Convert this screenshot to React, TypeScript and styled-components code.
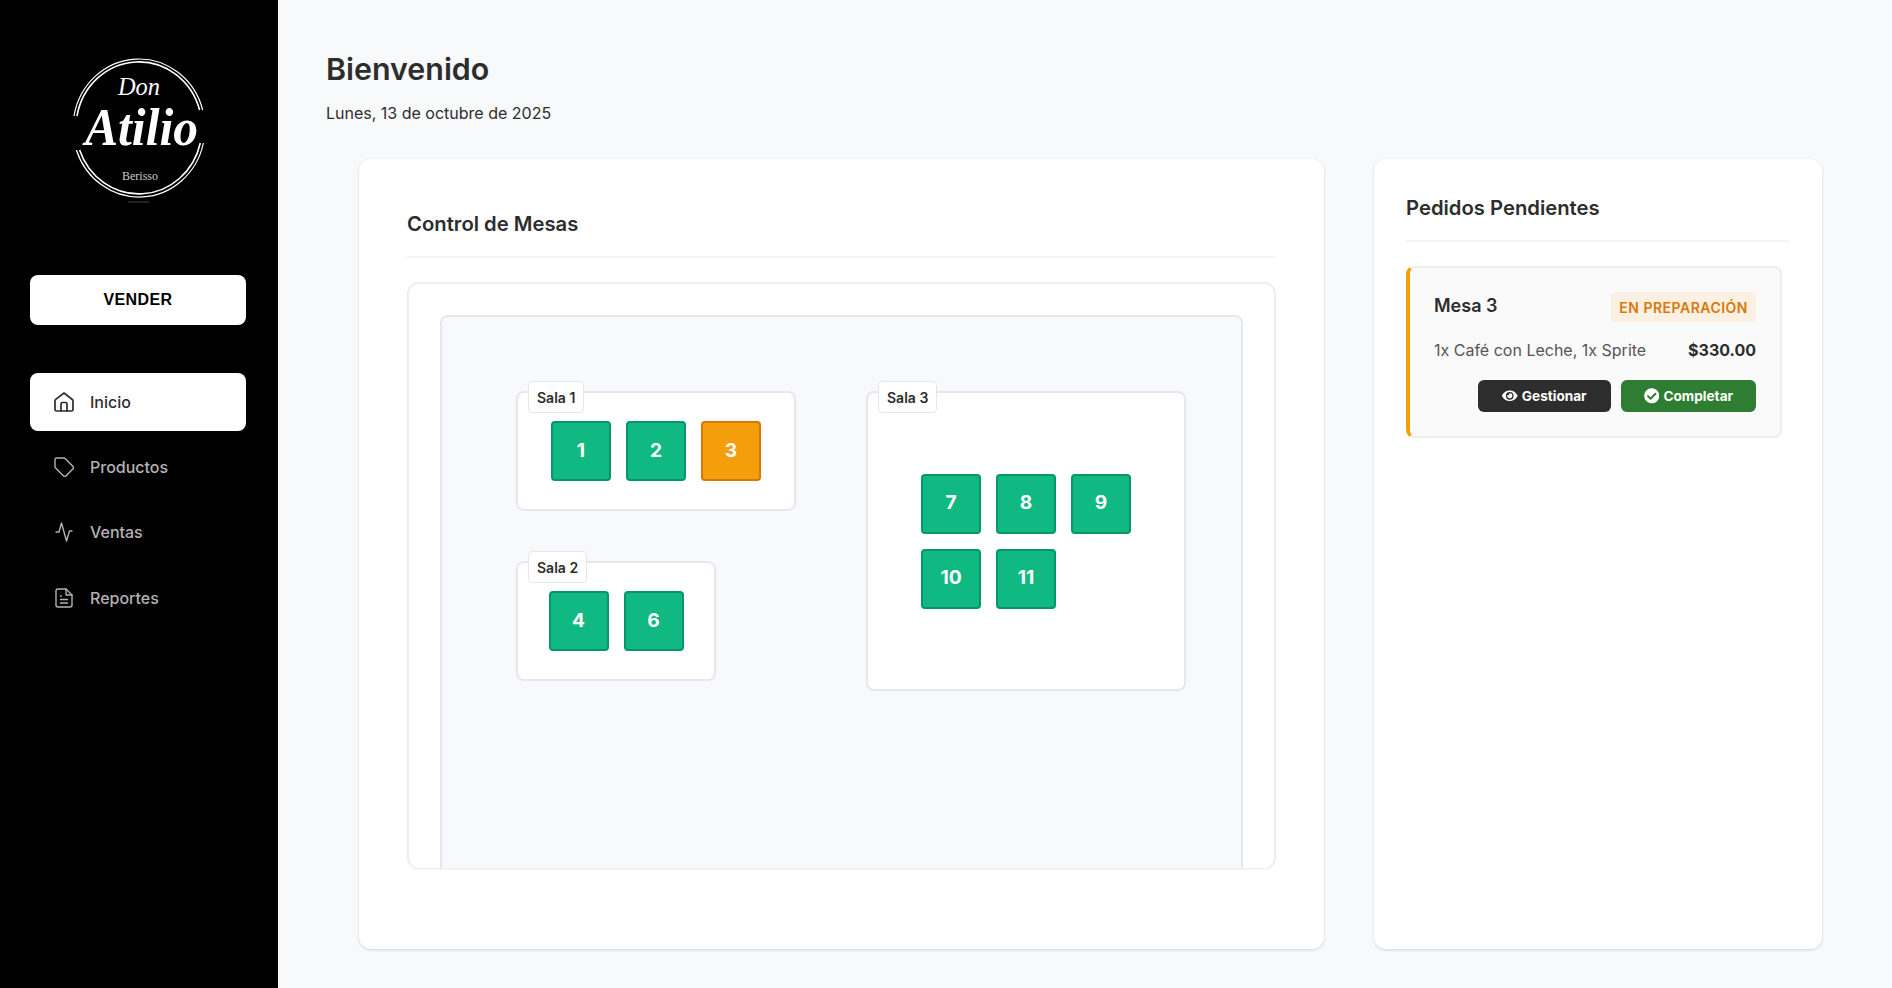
import React from "react";
import styled, { createGlobalStyle } from "styled-components";
import { FaEye, FaCheckCircle } from "react-icons/fa";

const Global = createGlobalStyle`
  html, body { margin: 0; padding: 0; height: 100%; background: #f8f9fa; }
  body { font-family: Inter, "Noto Sans", sans-serif; color: #2d2d2d; overflow: hidden; }
  * { box-sizing: border-box; }
`;

const Shell = styled.div`
  display: flex;
  width: 1892px;
  height: 988px;
  background: #f8f9fa;
`;

const Sidebar = styled.aside`
  width: 278px;
  flex: none;
  background: #000;
  padding: 0 32px 0 30px;
  display: flex;
  flex-direction: column;
`;

const LogoWrap = styled.div`
  height: 275px;
  margin: 0 -30px;
  display: flex;
  flex-direction: column;
  padding: 56px 0 0 70px;
`;

const VenderButton = styled.button`
  height: 50px;
  width: 216px;
  border: 0;
  border-radius: 8px;
  background: #fff;
  color: #000;
  font: 700 16px "Liberation Sans", Arial, sans-serif;
  letter-spacing: 0.4px;
  flex: none;
`;

const Nav = styled.nav`
  margin-top: 48px;
  display: flex;
  flex-direction: column;
  gap: 7.4px;
`;

const NavItem = styled.a<{ $active?: boolean }>`
  height: 58px;
  width: 216px;
  display: flex;
  align-items: center;
  gap: 16px;
  padding: 0 0 1px 24px;
  border-radius: 8px;
  font-size: 16px;
  font-weight: 500;
  background: ${(p) => (p.$active ? "#fff" : "transparent")};
  color: ${(p) => (p.$active ? "#2d2d2d" : "#b3b3b3")};
  svg { width: 20px; height: 20px; flex: none; }
`;

const Main = styled.main`
  flex: 1;
  min-width: 0;
  padding: 49px 70px 39px 48px;
  display: flex;
  flex-direction: column;
`;

const Title = styled.h1`
  margin: 0;
  font-size: 30.4px;
  line-height: 40px;
  font-weight: 600;
  color: #2d2d2d;
`;

const DateLine = styled.p`
  margin: 14px 0 0;
  font-size: 16px;
  line-height: 20px;
  color: #2d2d2d;
`;

const Columns = styled.div`
  flex: 1;
  min-height: 0;
  margin: 36px 0 0 33px;
  display: flex;
  gap: 50px;
`;

const Card = styled.section<{ $width: number; $pad: string }>`
  width: ${(p) => p.$width}px;
  flex: none;
  height: 790px;
  background: #fff;
  border-radius: 12px;
  box-shadow: 0 1px 3px rgba(0, 0, 0, 0.16);
  padding: ${(p) => p.$pad};
`;

const CardTitle = styled.h2`
  margin: 0;
  font-size: 20.25px;
  line-height: 24px;
  font-weight: 600;
  color: #2d2d2d;
  padding-bottom: 20px;
  border-bottom: 2px solid #f5f5f5;
`;

const PlanFrame = styled.div`
  margin-top: 24px;
  height: 587px;
  border: 2px solid #eeeeee;
  border-bottom-width: 1px;
  border-radius: 12px;
  background: #fff;
  padding: 31px 31px 0;
  overflow: hidden;
  box-shadow: 0 1px 2px rgba(0, 0, 0, 0.05);
`;

const Plan = styled.div`
  position: relative;
  height: 600px;
  background: #f8f9fa;
  border: 2px solid #e5e7eb;
  border-radius: 8px;
`;

const Room = styled.div<{ $x: number; $y: number; $w: number; $h: number; $cols: number }>`
  position: absolute;
  left: ${(p) => p.$x}px;
  top: ${(p) => p.$y}px;
  width: ${(p) => p.$w}px;
  height: ${(p) => p.$h}px;
  background: #fff;
  border: 2px solid #e5e7eb;
  border-radius: 8px;
  display: grid;
  grid-template-columns: repeat(${(p) => p.$cols}, 60px);
  grid-auto-rows: 60px;
  gap: 15px;
  justify-content: center;
  align-content: center;
`;

const RoomLabel = styled.span`
  position: absolute;
  left: 10px;
  top: -12px;
  height: 32px;
  padding: 0 8px;
  display: flex;
  align-items: center;
  background: #fff;
  border: 1px solid #e5e7eb;
  border-radius: 4px;
  font-size: 14px;
  font-weight: 600;
  color: #2d2d2d;
`;

const Table = styled.div<{ $busy?: boolean }>`
  width: 60px;
  height: 60px;
  display: flex;
  align-items: center;
  justify-content: center;
  border-radius: 4px;
  border: 2px solid ${(p) => (p.$busy ? "#d97706" : "#059669")};
  background: ${(p) => (p.$busy ? "#f59e0b" : "#10b981")};
  color: #fff;
  font-size: 19.2px;
  font-weight: 700;
  padding-bottom: 3px;
`;

const Order = styled.article`
  margin-top: 24px;
  width: 376px;
  height: 172px;
  background: #fafafa;
  border: 2px solid #eeeeee;
  border-left: 4px solid #f59e0b;
  border-radius: 8px;
  padding: 24px 24px 0;
`;

const OrderRow = styled.div<{ $mt?: number }>`
  display: flex;
  align-items: center;
  justify-content: space-between;
  margin-top: ${(p) => p.$mt ?? 0}px;
`;

const OrderName = styled.h3`
  margin: 0 0 3px;
  font-size: 18px;
  font-weight: 600;
  color: #2d2d2d;
`;

const Badge = styled.span`
  height: 30px;
  padding: 0 8px;
  display: flex;
  align-items: center;
  border-radius: 4px;
  background: #fbf0e2;
  color: #d97706;
  font-size: 14px;
  font-weight: 600;
  letter-spacing: 0.5px;
`;

const Items = styled.span`
  font-size: 16px;
  color: #555;
`;

const Price = styled.strong`
  font-size: 16px;
  font-weight: 700;
  color: #2d2d2d;
`;

const Actions = styled.div`
  margin-top: 20px;
  display: flex;
  justify-content: flex-end;
  gap: 10px;
`;

const ActionButton = styled.button<{ $bg: string; $w: number }>`
  width: ${(p) => p.$w}px;
  height: 32px;
  border: 0;
  border-radius: 6px;
  background: ${(p) => p.$bg};
  color: #fff;
  display: flex;
  align-items: center;
  justify-content: center;
  gap: 4px;
  font: 700 13.6px Inter, sans-serif;
  svg { width: 15.5px; height: 15.5px; }
`;

const rooms = [
  { name: "Sala 1", x: 74, y: 74, w: 280, h: 120, cols: 3, tables: [1, 2, 3] },
  { name: "Sala 2", x: 74, y: 244, w: 200, h: 120, cols: 2, tables: [4, 6] },
  { name: "Sala 3", x: 424, y: 74, w: 320, h: 300, cols: 3, tables: [7, 8, 9, 10, 11] },
];

const Logo = () => (
  <svg width="180" height="150" viewBox="0 0 180 150" fill="none">
    <path d="M4 60A66 69 0 0 1 132.7 54M133.4 87A66 69 0 0 1 6.4 94" stroke="#fff" strokeWidth="1.2" />
    <path d="M7 60A63 66 0 0 1 129.6 54M130.3 87A63 66 0 0 1 9.6 94" stroke="#fff" strokeWidth="1.6" />
    <path d="M58 146h21" stroke="#fff" strokeOpacity="0.25" strokeWidth="1" />
    <text x="69" y="39" textAnchor="middle" fill="#fff" fontFamily="'Liberation Serif', serif" fontStyle="italic" fontSize="26" textLength="42" lengthAdjust="spacingAndGlyphs">Don</text>
    <text x="71.5" y="89" textAnchor="middle" fill="#fff" fontFamily="'Liberation Serif', serif" fontStyle="italic" fontWeight="700" fontSize="52" textLength="113" lengthAdjust="spacingAndGlyphs">Atilio</text>
    <text x="70" y="124" textAnchor="middle" fill="#ccc" fontFamily="'Liberation Serif', serif" fontSize="13" textLength="36" lengthAdjust="spacingAndGlyphs">Berisso</text>
  </svg>
);

const HomeIcon = () => (
  <svg viewBox="2 2 20 20" fill="none" stroke="currentColor" strokeWidth="1.7" strokeLinecap="round" strokeLinejoin="round">
    <path d="M4.5 21h15a1.5 1.5 0 0 0 1.5-1.5V10.5a1 1 0 0 0-.4-.8L12 3 3.4 9.7a1 1 0 0 0-.4.8v9A1.5 1.5 0 0 0 4.5 21z" />
    <path d="M9 21v-7a1.5 1.5 0 0 1 1.5-1.5h3A1.5 1.5 0 0 1 15 14v7" />
  </svg>
);

const TagIcon = () => (
  <svg viewBox="2 2 20 20" fill="none" stroke="currentColor" strokeWidth="1.4" strokeLinecap="round" strokeLinejoin="round">
    <path d="M3 4.5A1.5 1.5 0 0 1 4.5 3h7.2a2 2 0 0 1 1.4.6l7.7 7.7a2 2 0 0 1 0 2.8l-6.7 6.7a2 2 0 0 1-2.8 0l-7.7-7.7a2 2 0 0 1-.6-1.4z" />
  </svg>
);

const PulseIcon = () => (
  <svg viewBox="2 2 20 20" fill="none" stroke="currentColor" strokeWidth="1.4" strokeLinecap="round" strokeLinejoin="round">
    <path d="M4 12h3L9.5 3l5 18 3-10H20" />
  </svg>
);

const FileIcon = () => (
  <svg viewBox="2 2 20 20" fill="none" stroke="currentColor" strokeWidth="1.4" strokeLinecap="round" strokeLinejoin="round">
    <path d="M14 3H6a2 2 0 0 0-2 2v14a2 2 0 0 0 2 2h12a2 2 0 0 0 2-2V9z" />
    <path d="M14 3v6h6" />
    <path d="M8.5 10h1M8.5 13.5h7M8.5 17h7" />
  </svg>
);

export default function App() {
  return (
    <Shell>
      <Global />
      <Sidebar>
        <LogoWrap>
          <Logo />
        </LogoWrap>
        <VenderButton>VENDER</VenderButton>
        <Nav>
          <NavItem $active><HomeIcon />Inicio</NavItem>
          <NavItem><TagIcon />Productos</NavItem>
          <NavItem><PulseIcon />Ventas</NavItem>
          <NavItem><FileIcon />Reportes</NavItem>
        </Nav>
      </Sidebar>
      <Main>
        <Title>Bienvenido</Title>
        <DateLine>Lunes, 13 de octubre de 2025</DateLine>
        <Columns>
          <Card $width={965} $pad="53px 48px 0">
            <CardTitle>Control de Mesas</CardTitle>
            <PlanFrame>
              <Plan>
                {rooms.map((r) => (
                  <Room key={r.name} $x={r.x} $y={r.y} $w={r.w} $h={r.h} $cols={r.cols}>
                    <RoomLabel>{r.name}</RoomLabel>
                    {r.tables.map((t) => (
                      <Table key={t} $busy={t === 3}>{t}</Table>
                    ))}
                  </Room>
                ))}
              </Plan>
            </PlanFrame>
          </Card>
          <Card $width={448} $pad="37px 32px 0">
            <CardTitle>Pedidos Pendientes</CardTitle>
            <Order>
              <OrderRow>
                <OrderName>Mesa 3</OrderName>
                <Badge>EN PREPARACIÓN</Badge>
              </OrderRow>
              <OrderRow $mt={18}>
                <Items>1x Café con Leche, 1x Sprite</Items>
                <Price>$330.00</Price>
              </OrderRow>
              <Actions>
                <ActionButton $bg="#2d2d2d" $w={133}><FaEye />Gestionar</ActionButton>
                <ActionButton $bg="#2e7d32" $w={135}><FaCheckCircle />Completar</ActionButton>
              </Actions>
            </Order>
          </Card>
        </Columns>
      </Main>
    </Shell>
  );
}
